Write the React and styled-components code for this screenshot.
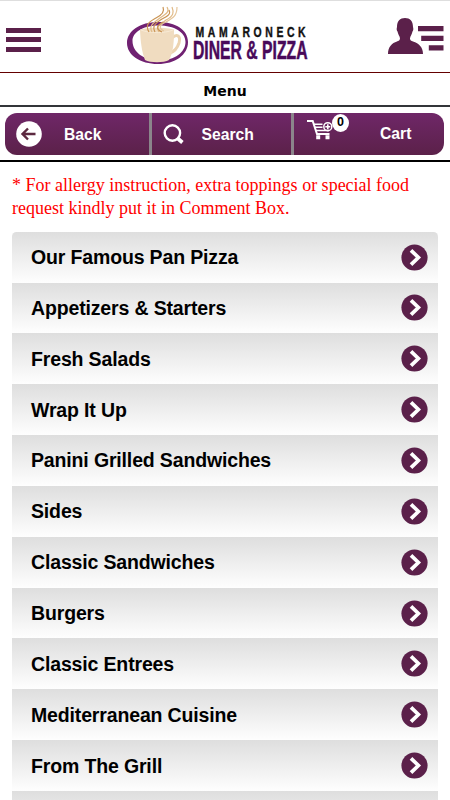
import React from 'react';
import styled, { createGlobalStyle } from 'styled-components';

const categories = [
  'Our Famous Pan Pizza',
  'Appetizers & Starters',
  'Fresh Salads',
  'Wrap It Up',
  'Panini Grilled Sandwiches',
  'Sides',
  'Classic Sandwiches',
  'Burgers',
  'Classic Entrees',
  'Mediterranean Cuisine',
  'From The Grill',
  '',
];

function Logo() {
  return (
    <LogoSvg viewBox="0 0 190 66">
      <path
        fillRule="evenodd"
        fill="#702172"
        d="M7 43 C7 31 20 22 38 22 C56 22 68 30 68 42 C68 55 55 64 38 64 C20 64 7 55 7 43Z
           M12.5 41 C12.5 52 24 60.5 39 60.5 C55 60.5 65.5 52 65.5 42 C65.5 32 54 25.5 39 25.5 C23 25.5 12.5 32 12.5 41Z"
      />
      <path
        d="M52 38 C57 33 61 36 59 43 C57 49 53 52 50 53"
        fill="none"
        stroke="#ecd3b0"
        strokeWidth="3"
      />
      <path
        d="M20 29.5 C28 27 46 27 54 29.5 C54 44 53 53 49 60 C44 63 30 63 25 60 C22 52 20.5 43 20 29.5Z"
        fill="#f0dcc0"
      />
      <path d="M21 30 C29 33.5 45 33.5 53 30" fill="none" stroke="#f8ead5" strokeWidth="1" />
      <g fill="none" stroke="#c99353" strokeWidth="1.2">
        <path d="M29 32 C24 24 31 21 36 18 C42 15 45 12 43 7" />
        <path d="M32 32 C28 25 35 22 40 18 C46 14 50 12 47 7" stroke="#e0b985" />
        <path d="M35 32 C31 25 38 22 42 19 C48 16 51 14 49 10" />
        <path d="M39 32 C35 26 41 24 46 20 C54 16 54 12 52 7" stroke="#e0b985" />
        <path d="M44 31 C37 28 41 24 46 22 C53 18 57 16 57 7" stroke="#e5c69c" />
        <path d="M42 32 C34 28 38 25 43 22" />
      </g>
      <LogoName transform="translate(75.5 37) scale(0.72 1)" textLength="153" lengthAdjust="spacing">
        MAMARONECK
      </LogoName>
      <LogoTitle x="73" y="59" textLength="114.5" lengthAdjust="spacingAndGlyphs">
        DINER &amp; PIZZA
      </LogoTitle>
    </LogoSvg>
  );
}

function AccountIcon() {
  return (
    <svg width="58" height="38" viewBox="0 0 58 38" fill="#5b204a">
      <path d="M0 36 C0 29 4 25 9 23.5 C12 22.5 12.5 21 11.5 18.5 C10.5 17 10 15 9.5 13.5 C8.5 12.5 8.5 10.5 9 9 C9 3 12 0 17 0 C22 0 25 3 25 9 C25.5 10.5 25.5 12.5 24.5 13.5 C24 15 23.5 17 22.5 18.5 C21.5 21 22 22.5 25 23.5 C31 25.5 35 29 35 36Z" />
      <path d="M30 8h25.500v5.200H30zM33.200 17.700h22.300v5.200H33.200zM40.800 27.300h14.700v5.200H40.800z" />
    </svg>
  );
}

function BackIcon() {
  return (
    <svg width="26" height="26" viewBox="0 0 26 26">
      <circle cx="13" cy="13" r="12.8" fill="#fff" />
      <path d="M19.5 13H7M12 7.5L6.5 13l5.5 5.5" fill="none" stroke="#5c2940" strokeWidth="2.4" />
    </svg>
  );
}

function SearchIcon() {
  return (
    <svg width="22" height="22" viewBox="0 0 22 22" fill="none" stroke="#fff">
      <circle cx="9.4" cy="10" r="7.7" strokeWidth="2.4" />
      <path d="M14.2 15l5.2 4.5" strokeWidth="3.8" />
    </svg>
  );
}

function CartIcon() {
  return (
    <svg width="26" height="22" viewBox="0 0 26 22" fill="none" stroke="#fff">
      <path d="M0 2h5.7L10 15h12.5" strokeWidth="2" />
      <path d="M7 5.2h8.5M8 8.2h7.5M9 11.6h13" strokeWidth="1.5" />
      <circle cx="20.8" cy="7.7" r="4" strokeWidth="1.5" />
      <path d="M20.8 5.2v5M18.3 7.7h5" strokeWidth="1.6" />
      <path d="M9.2 16.3h4v4h-4zM18.5 16.3h4v4h-4z" fill="#fff" stroke="none" />
    </svg>
  );
}

function ArrowIcon() {
  return (
    <svg width="27" height="27" viewBox="0 0 27 27">
      <circle cx="13.5" cy="13.5" r="13.1" fill="#5b204a" />
      <path d="M10 6.3l7.4 7.2-7.4 7.2" fill="none" stroke="#fff" strokeWidth="3.7" />
    </svg>
  );
}

function App() {
  return (
    <Page>
      <GlobalStyle />
      <Header>
        <MenuButton aria-label="Open menu">
          <span />
          <span />
          <span />
        </MenuButton>
        <Logo />
        <AccountIcon />
      </Header>
      <Title>Menu</Title>
      <ToolbarWrap>
        <Toolbar>
          <Tool $pad="11px">
            <BackIcon />
            <ToolLabel $gap="22.5px">Back</ToolLabel>
          </Tool>
          <Tool $pad="11px">
            <SearchIcon />
            <ToolLabel $gap="17px">Search</ToolLabel>
          </Tool>
          <Tool $pad="13px">
            <CartHolder>
              <CartIcon />
              <Badge>0</Badge>
            </CartHolder>
            <ToolLabel $gap="47px" $up>Cart</ToolLabel>
          </Tool>
        </Toolbar>
      </ToolbarWrap>
      <Notice>
        * For allergy instruction, extra toppings or special food
        <br />
        request kindly put it in Comment Box.
      </Notice>
      <List>
        {categories.map((name) => (
          <Row key={name}>
            <RowName>{name}</RowName>
            <ArrowIcon />
          </Row>
        ))}
      </List>
    </Page>
  );
}

const GlobalStyle = createGlobalStyle`
  * {
    box-sizing: border-box;
  }

  body {
    margin: 0;
    background: #fff;
    overflow: hidden;
  }

  svg {
    display: block;
    flex-shrink: 0;
  }
`;

const Page = styled.div`
  width: 450px;
  height: 800px;
  overflow: hidden;
  background: #fff;
  font-family: "Liberation Sans", Arial, sans-serif;
`;

const Header = styled.header`
  display: flex;
  align-items: flex-start;
  height: 73px;
  border-top: 1px solid #dedede;
  border-bottom: 1px solid #640000;
  padding-left: 6px;

  > svg:last-child {
    margin: 17px 0 0 77.5px;
  }
`;

const MenuButton = styled.button`
  display: flex;
  flex-direction: column;
  gap: 4.5px;
  width: 35px;
  margin: 26.5px 79px 0 0;
  padding: 0;
  border: 0;
  background: none;

  span {
    height: 5px;
    background: #5b204a;
  }
`;

const LogoSvg = styled.svg`
  width: 190px;
  height: 66px;
  margin-top: -1px;
  overflow: visible;
`;

const LogoName = styled.text`
  font: bold 14.5px "Liberation Sans", sans-serif;
  fill: #111;
  stroke: #111;
  stroke-width: 0.4px;
`;

const LogoTitle = styled.text`
  font: bold 25px "Liberation Sans Narrow", "Liberation Sans", sans-serif;
  fill: #49095a;
  stroke: #49095a;
  stroke-width: 0.5px;
`;

const Title = styled.h1`
  height: 34px;
  margin: 0;
  border-bottom: 2px solid;
  border-image: linear-gradient(#aaa 50%, #333539 50%) 2;
  font: bold 14px/36px "DejaVu Sans", Verdana, sans-serif;
  text-align: center;
  color: #000;
`;

const ToolbarWrap = styled.div`
  height: 55px;
  padding: 6px 6.5px 0 4.5px;
  border-bottom: 2px solid;
  border-image: linear-gradient(#ddd 50%, #000 50%) 2;
`;

const Toolbar = styled.nav`
  display: grid;
  grid-template-columns: 147px 142.5px 1fr;
  height: 41.5px;
  overflow: hidden;
  border-radius: 12px;
  background: linear-gradient(#6f2768, #5b2149);
`;

const Tool = styled.div`
  display: flex;
  align-items: center;
  padding-left: ${({ $pad }) => $pad};
  border-right: 3px solid #8b858b;

  &:last-child {
    border-right: 0;
  }
`;

const ToolLabel = styled.span`
  margin-left: ${({ $gap }) => $gap};
  padding-top: ${({ $up }) => ($up ? '0' : '2px')};
  font-size: 15.7px;
  font-weight: bold;
  line-height: 20px;
  color: #fff;
`;

const CartHolder = styled.div`
  position: relative;
  margin-top: -8px;
`;

const Badge = styled.span`
  position: absolute;
  left: 25px;
  top: -5px;
  width: 17px;
  height: 18px;
  border-radius: 50%;
  background: #fff;
  font-size: 12.5px;
  font-weight: bold;
  line-height: 17px;
  text-align: center;
  color: #000;
`;

const Notice = styled.p`
  margin: 12px 12px 0;
  font: 18px/22.6px "Liberation Serif", "Times New Roman", serif;
  white-space: nowrap;
  color: #f00;
`;

const List = styled.div`
  margin: 12.5px 12px 0;
  border-radius: 4.5px 4.5px 0 0;
  overflow: hidden;
`;

const Row = styled.div`
  display: flex;
  align-items: center;
  justify-content: space-between;
  height: 50.85px;
  padding: 0 10.5px 0 19px;
  background: linear-gradient(#dedede, #fefefe);
`;

const RowName = styled.span`
  padding-top: 1px;
  font-size: 19.5px;
  font-weight: bold;
  letter-spacing: -0.15px;
  color: #000;
`;

export default App;
